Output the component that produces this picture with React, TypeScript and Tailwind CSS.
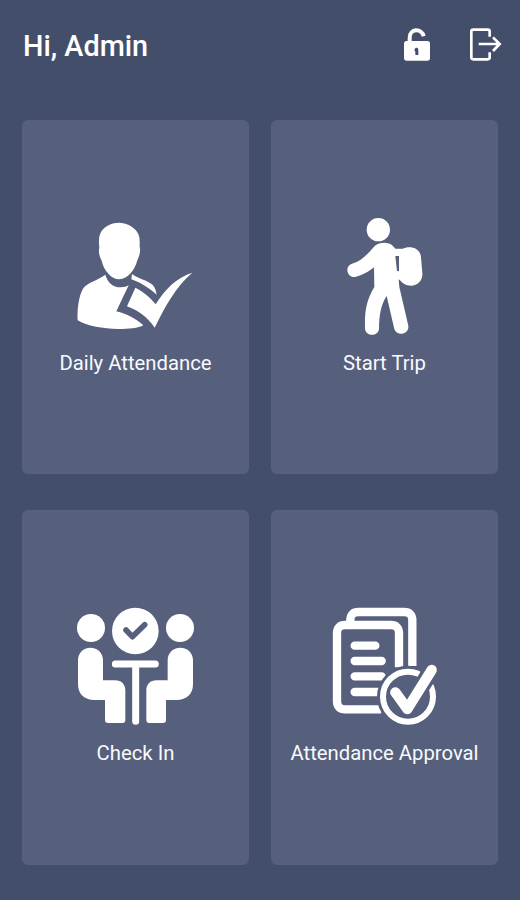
import type { ReactNode } from 'react'

interface MenuItem {
  label: string
  icon: ReactNode
}

function DailyAttendanceIcon() {
  return (
    <svg className="h-[120px] w-[119px]" viewBox="48 18 357 360" fill="currentColor">
      <path d="M177 38C199 39 219 49 230 64C241 78 239 94 239 110C243 123 238 138 232 151C225 180 203 207 178 208C153 207 131 181 125 152C119 140 114 127 118 113C116 95 116 80 122 68C129 52 152 38 177 38Z" />
      <path d="M136 194C143 218 158 232 182 232C193 232 200 230 206 226L169 304C199 311 230 327 250 346C236 355 205 357 175 357C130 356 80 349 53 331C51 300 56 258 69 236C79 219 113 211 136 194Z" />
      <path d="M216 192C232 204 260 211 276 223C285 231 288 242 290 254C268 235 245 219 214 208Z" />
      <path d="M226 233C249 244 272 263 287 283C314 238 352 201 397 188C347 229 315 291 284 353C263 322 234 301 201 289Z" />
    </svg>
  )
}

function StartTripIcon() {
  return (
    <svg className="h-[120px] w-[119px]" viewBox="15 33 357 360" fill="currentColor">
      <circle cx="175" cy="74" r="35" />
      <path d="M162 125C174 112 204 109 218 122L226 131H249C258 125 278 125 287 131C298 137 303 147 303 158L307 203C309 225 294 242 273 242C258 242 247 235 240 226L236 223L238 246L265 362C268 390 229 394 223 372L200 273C183 299 178 326 177 371C175 395 138 396 135 371C134 326 136 291 163 246L162 187C147 199 127 211 105 216C80 218 73 183 96 176C127 167 142 147 162 125ZM226 153L231 198L237 199V153Z" />
    </svg>
  )
}

function CheckInIcon() {
  return (
    <svg className="h-[120px] w-[119px]" viewBox="33 33 357 360" fill="currentColor">
      <circle cx="78" cy="99" r="42" />
      <circle cx="345" cy="99" r="42" />
      <path d="M39 196C39 174 55 158 76 158C98 158 114 174 114 196V256H151C169 256 181 268 181 286V375Q181 384 172 384H129Q120 384 120 375V315H88C58 315 39 297 39 268Z" />
      <path d="M384 196C384 174 368 158 346 158C324 158 308 174 308 196V256H274C256 256 244 268 244 286V375Q244 384 253 384H294Q303 384 303 375V315H335C365 315 384 297 384 268Z" />
      <path d="M151 207H271M212 207V379" fill="none" stroke="currentColor" strokeWidth="21" strokeLinecap="round" />
      <circle cx="211" cy="108" r="70" />
      <path d="M183 105L202 125L239 89" className="stroke-[#565f7c]" fill="none" strokeWidth="17" strokeLinecap="round" strokeLinejoin="round" />
    </svg>
  )
}

function AttendanceApprovalIcon() {
  return (
    <svg
      className="h-[120px] w-[119px]"
      viewBox="135 33 357 360"
      fill="none"
      stroke="currentColor"
      strokeWidth="25"
      strokeLinecap="round"
      strokeLinejoin="round"
    >
      <path d="M211 82V76Q211 51 236 51H372Q397 51 397 76V213" strokeLinecap="butt" />
      <path d="M357 217V115Q357 90 332 90H196Q171 90 171 115V318Q171 343 196 343H304" strokeLinecap="butt" />
      <path d="M224 152H286M224 198H305M224 244H305M224 291H295" />
      {/* Gap between the sheets and the badge */}
      <circle cx="384" cy="305" r="93" className="fill-[#565f7c]" stroke="none" />
      <circle cx="384" cy="305" r="75" strokeWidth="18" />
      <path d="M346 292L382 342L455 225" className="stroke-[#565f7c]" strokeWidth="51" />
      <path d="M346 292L382 342L455 225" strokeWidth="31" />
    </svg>
  )
}

function UnlockIcon() {
  return (
    <svg className="h-[35px] w-[28px]" viewBox="0 0 84 105" fill="currentColor">
      <path d="M20 47V33C20 3 56 3 62 28" fill="none" stroke="currentColor" strokeWidth="12" />
      <path fillRule="evenodd" d="M11 42H73Q81 42 81 50V93Q81 101 73 101H11Q3 101 3 93V50Q3 42 11 42ZM41 62C34 62 33 70 37 74V84H46V70C46 65 45 62 41 62Z" />
    </svg>
  )
}

function LogoutIcon() {
  return (
    <svg className="h-[35px] w-[34px]" viewBox="0 0 102 105" fill="none" stroke="currentColor" strokeWidth="8">
      <path d="M62 29V14Q62 8 56 8H13Q7 8 7 14V91Q7 97 13 97H56Q62 97 62 91V76" />
      <path d="M29 51H92M72 31L92 51L72 72" />
    </svg>
  )
}

const menuItems: MenuItem[] = [
  { label: 'Daily Attendance', icon: <DailyAttendanceIcon /> },
  { label: 'Start Trip', icon: <StartTripIcon /> },
  { label: 'Check In', icon: <CheckInIcon /> },
  { label: 'Attendance Approval', icon: <AttendanceApprovalIcon /> },
]

export default function App() {
  return (
    <div className="flex h-[900px] w-[520px] flex-col border-b border-[#46486b] bg-[#434e6b] font-['Roboto',sans-serif] text-white">
      <header className="flex h-[120px] items-start justify-between pt-[27px] pr-[17px] pl-[23px]">
        <h1 className="mt-px text-[28.8px] leading-9 font-medium">Hi, Admin</h1>
        <div className="flex gap-[38px]">
          <button aria-label="Unlock">
            <UnlockIcon />
          </button>
          <button aria-label="Log out">
            <LogoutIcon />
          </button>
        </div>
      </header>

      <main className="grid grid-cols-[227px_227px] grid-rows-[354px_355px] gap-x-[22px] gap-y-9 pl-[22px]">
        {menuItems.map((item) => (
          <button
            key={item.label}
            className="flex flex-col items-center rounded-md bg-[#565f7c] pt-24"
          >
            {item.icon}
            <span className="mt-[13px] text-[20.3px] leading-7 whitespace-nowrap text-slate-50">
              {item.label}
            </span>
          </button>
        ))}
      </main>
    </div>
  )
}
